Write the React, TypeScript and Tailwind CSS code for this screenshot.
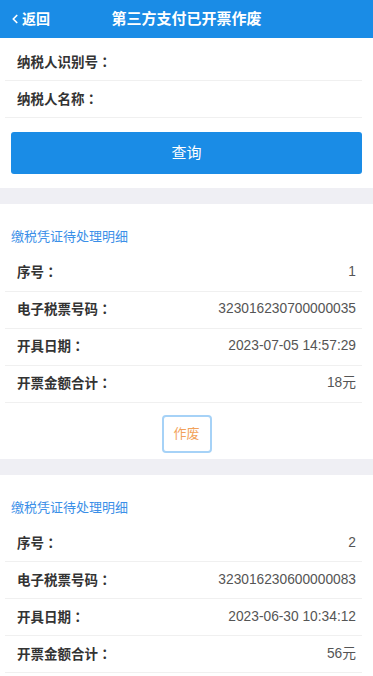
import { ChevronLeft } from "lucide-react";

interface Voucher {
  seq: string;
  code: string;
  date: string;
  amount: string;
}

const VOUCHERS: Voucher[] = [
  { seq: "1", code: "323016230700000035", date: "2023-07-05 14:57:29", amount: "18元" },
  { seq: "2", code: "323016230600000083", date: "2023-06-30 10:34:12", amount: "56元" },
];

const font = { fontFamily: '"Liberation Sans", Arial, "Noto Sans CJK SC", sans-serif' };

// label ends with a full-width colon; draw it centred like the original font does
function Label({ text }: { text: string }) {
  return (
    <span className="text-[13.5px] font-bold text-[#333] [text-spacing-trim:space-all]">
      {text.slice(0, -1)}
      <span className="font-['Noto_Sans_CJK_TC',sans-serif]">{text.slice(-1)}</span>
    </span>
  );
}

function Row({ label, value }: { label: string; value?: string }) {
  return (
    <div className="ml-[5px] mr-[11px] flex h-[37px] items-center justify-between border-b border-[#f0f0f0] pl-[12px] pr-[6px]">
      <Label text={label} />
      {value && <span className="text-[13.75px] text-[#555]">{value}</span>}
    </div>
  );
}

export default function App() {
  return (
    <div className="min-h-[676px] w-[373px] bg-white" style={font}>
      <div className="relative flex h-[38px] items-center bg-[#1a8ce6] text-white">
        <div className="flex items-center pl-[8px] text-[14px] font-bold">
          <ChevronLeft className="h-[14px] w-[14px]" strokeWidth={3} />
          <span>返回</span>
        </div>
        <div className="pointer-events-none absolute left-0 right-0 text-center text-[15px] font-bold">
          第三方支付已开票作废
        </div>
      </div>

      <div className="pt-[6px]">
        <Row label="纳税人识别号：" />
        <Row label="纳税人名称：" />
      </div>
      <div className="px-[11px] py-[14px]">
        <button className="h-[42px] w-full rounded-[3px] bg-[#1a8ce6] text-[15px] text-white">查询</button>
      </div>

      {VOUCHERS.map((v, i) => (
        <div key={v.seq}>
          <div className="h-[16px] bg-[#efeff4]" />
          <div className="px-[11px] pb-[8px] pt-[23px] text-[13px] text-[#3b8fe8]">缴税凭证待处理明细</div>
          <Row label="序号：" value={v.seq} />
          <Row label="电子税票号码：" value={v.code} />
          <Row label="开具日期：" value={v.date} />
          <Row label="开票金额合计：" value={v.amount} />
          {i === 0 && (
            <div className="flex justify-center pb-[6px] pt-[12px]">
              <button className="h-[38px] w-[50px] rounded-[4px] border-2 border-[#a6d2f7] text-[13px] text-[#f2a25a]">
                作废
              </button>
            </div>
          )}
        </div>
      ))}
    </div>
  );
}
